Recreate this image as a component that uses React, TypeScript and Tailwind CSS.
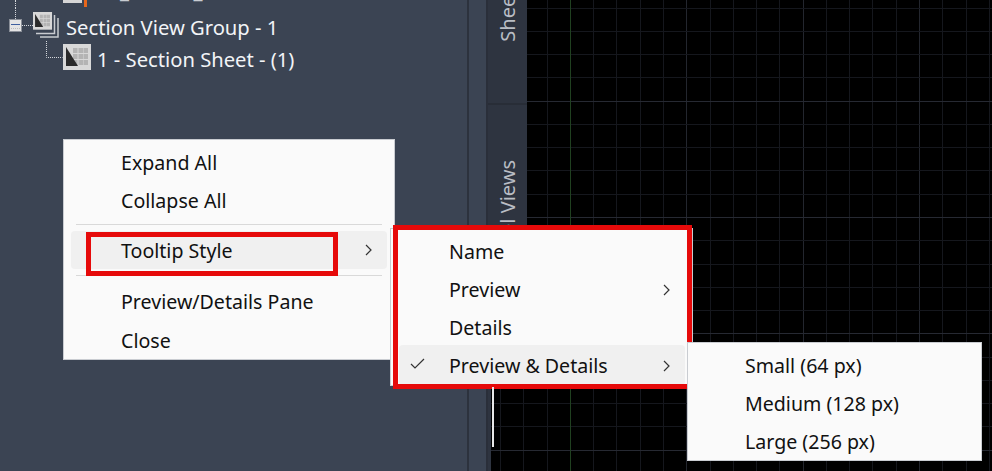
const uiFont = "font-['Noto_Sans','Open_Sans',sans-serif]";

function Chevron() {
  return (
    <svg className="w-[7px] h-[12px] text-[#333]" viewBox="0 0 7 12" fill="none" stroke="currentColor" strokeWidth={1.2}>
      <path d="M1 1l5 5-5 5" />
    </svg>
  );
}

function Check() {
  return (
    <svg className="w-[15px] h-[11px] text-[#333]" viewBox="0 0 15 11" fill="none" stroke="currentColor" strokeWidth={1.2}>
      <path d="M1 6l4 4 9-9" />
    </svg>
  );
}

function SheetGlyph({ x, y, s }: { x: number; y: number; s: number }) {
  const cols = [10, 15.5, 20.5];
  const rows = [4, 10, 16];
  return (
    <g transform={`translate(${x} ${y}) scale(${s})`}>
      <rect width="28" height="26" fill="#d8d8d8" />
      {rows.map((r) => cols.map((c) => <rect key={`${r}-${c}`} x={c} y={r} width="4.5" height="5" fill="#b4b4b4" />))}
      <path d="M3 3l12 19H3z" fill="#2a2a2a" />
    </g>
  );
}

function GroupIcon() {
  // expander box, dotted connectors and the stacked sheet icon
  return (
    <svg className="w-[60px] h-[36px] shrink-0" viewBox="0 0 60 36">
      <path d="M15.5 0v11M22 17.5h11" stroke="#d5d8dc" strokeDasharray="1 1" fill="none" />
      <rect x="9.5" y="11.5" width="12" height="12" fill="#e4e4e4" stroke="#8a8f98" />
      <path d="M11 16.5h9" stroke="#3f5f9f" strokeWidth="1" />
      <path d="M11 20.5h9" stroke="#bbb" strokeDasharray="1 1" />
      <path d="M40 29h18V10" fill="none" stroke="#c8cbd0" strokeWidth="1.5" />
      <path d="M36 25.5h18.5V7" fill="none" stroke="#c8cbd0" strokeWidth="1.5" />
      <SheetGlyph x={33} y={4} s={0.68} />
    </svg>
  );
}

function SheetIcon() {
  return (
    <svg className="w-[45px] h-[28px] shrink-0 overflow-visible" viewBox="0 0 45 28">
      <path d="M0.5 -3v16.5h16" fill="none" stroke="#d5d8dc" strokeDasharray="1 1" />
      <SheetGlyph x={17} y={0} s={1} />
    </svg>
  );
}

const xs = Array.from({ length: 22 }, (_, i) => i);
const ys = Array.from({ length: 22 }, (_, i) => i);

function Grid() {
  // canvas starts at x=491; lines every 23.27px, major every 5th
  return (
    <svg className="w-full h-full block" shapeRendering="crispEdges">
      {xs.map((i) => {
        const x = Math.round(9.1 + i * 23.27);
        return <line key={i} x1={x} x2={x} y1={0} y2={471} stroke={(i - 3) % 5 === 0 ? '#23262e' : '#15171d'} />;
      })}
      {ys.map((i) => {
        const y = Math.round(7.6 + i * 23.27);
        return <line key={i} x1={0} x2={501} y1={y} y2={y} stroke={(i - 4) % 5 === 0 ? '#262932' : '#15171d'} />;
      })}
      <line x1={79} x2={79} y1={0} y2={471} stroke="#204020" />
    </svg>
  );
}

function Row({ label, arrow, checked, active, tall, nudge }: { label: string; arrow?: boolean; checked?: boolean; active?: boolean; tall?: boolean; nudge?: boolean }) {
  return (
    <div className={`relative flex items-center pl-[50px] pr-[15px] mx-[7px] rounded-[4px] ${tall ? 'h-[40px] -mt-[2px] pt-[2px]' : 'h-[38px]'} ${nudge ? 'pt-[2px]' : ''} ${active ? 'bg-[#f0f0f0]' : ''}`}>
      {checked && <span className="absolute left-[11px] top-[13px] flex"><Check /></span>}
      <span className="flex-1">{label}</span>
      {arrow && <span className={nudge ? '-mt-[2px] flex' : 'flex'}><Chevron /></span>}
    </div>
  );
}

function Separator() {
  return <div className="h-px bg-[#d9d9d9] mx-[12px]" />;
}

export default function App() {
  return (
    <div className={`relative w-[992px] h-[471px] overflow-hidden flex bg-black ${uiFont}`}>
      {/* Tree panel */}
      <div className="w-[467px] shrink-0 bg-[#3b4453] text-[#f2f4f7] text-[20.2px] leading-[32px]">
        <div className="h-[8px] relative overflow-hidden">
          <div className="absolute left-[15px] top-0 h-[8px] border-l border-dotted border-[#d5d8dc]" />
          <div className="absolute left-[63px] -top-[16px] w-[19px] h-[19px] bg-[#d6d6d6]" />
          <div className="absolute left-[84px] top-0 w-[3px] h-[7px] border-l-[3px] border-dotted border-[#e8671b]" />
          <div className="absolute left-[97px] -top-[26px] whitespace-nowrap text-[#c8ccd2]">01_ - C000_COVER</div>
        </div>
        <div className="flex items-center h-[36px]">
          <GroupIcon />
          <span className="ml-[6px] pt-[2px]">Section View Group - 1</span>
        </div>
        <div className="flex items-center h-[28px] pl-[46px]">
          <SheetIcon />
          <span className="ml-[6px] pt-[2px]">1 - Section Sheet - (1)</span>
        </div>
      </div>

      {/* Dividers */}
      <div className="w-[2px] shrink-0 bg-[#2c323d]" />
      <div className="w-[17px] shrink-0 bg-[#3b4453]" />
      <div className="w-[5px] shrink-0 bg-[#2e3440] border-l-2 border-[#2a2f3a]" />

      {/* Canvas with the tab strip lying over it */}
      <div className="relative flex-1 min-w-0">
        <Grid />
        <div className="absolute -left-[3px] top-0 w-[39px] h-[340px] bg-[#2e3440] flex flex-col text-[#b9bdc4] text-[20px] leading-none">
          <div className="h-[105px] shrink-0 overflow-hidden flex flex-col justify-end items-center pb-[61px] border-b-2 border-[#282d37]">
            <span className="[writing-mode:vertical-rl] rotate-180 whitespace-nowrap">Sheet Views</span>
          </div>
          <div className="flex-1 overflow-hidden flex flex-col items-center pt-[55px]">
            <span className="[writing-mode:vertical-rl] rotate-180 whitespace-nowrap">Model Views</span>
          </div>
        </div>
      </div>

      {/* Context menus */}
      <div className="absolute left-[63px] top-[139px] w-[332px] h-[221px] pt-[4px] bg-[#fafafa] border border-[#c9ccd1] text-[#111] text-[19.6px]">
        <Row label="Expand All" />
        <Row label="Collapse All" />
        <div className="h-[4px]" />
        <Separator />
        <div className="h-[6px]" />
        <Row label="Tooltip Style" arrow active nudge />
        <div className="h-[6px]" />
        <Separator />
        <div className="h-[7px]" />
        <Row label="Preview/Details Pane" />
        <Row label="Close" nudge />
      </div>
      <div className="absolute left-[86px] top-[232px] w-[252px] h-[44px] border-[5px] border-[#e60a0a]" />

      <div className="absolute left-[390px] top-[228px] w-[303px] h-[158px] pt-[4px] pl-px bg-[#fafafa] border border-[#c9ccd1] text-[#111] text-[19.6px]">
        <Row label="Name" />
        <Row label="Preview" arrow />
        <Row label="Details" />
        <Row label="Preview & Details" arrow checked active tall />
      </div>
      <div className="absolute left-[393px] top-[225px] w-[299px] h-[164px] border-[5px] border-[#e60a0a]" />

      <div className="absolute left-[492px] top-[387px] w-[2px] h-[60px] bg-[#e8e8e8]" />

      <div className="absolute left-[687px] top-[342px] w-[295px] h-[119px] pt-[4px] bg-[#fafafa] border border-[#c9ccd1] text-[#111] text-[19.6px]">
        <Row label="Small (64 px)" />
        <Row label="Medium (128 px)" />
        <Row label="Large (256 px)" />
      </div>
    </div>
  );
}
